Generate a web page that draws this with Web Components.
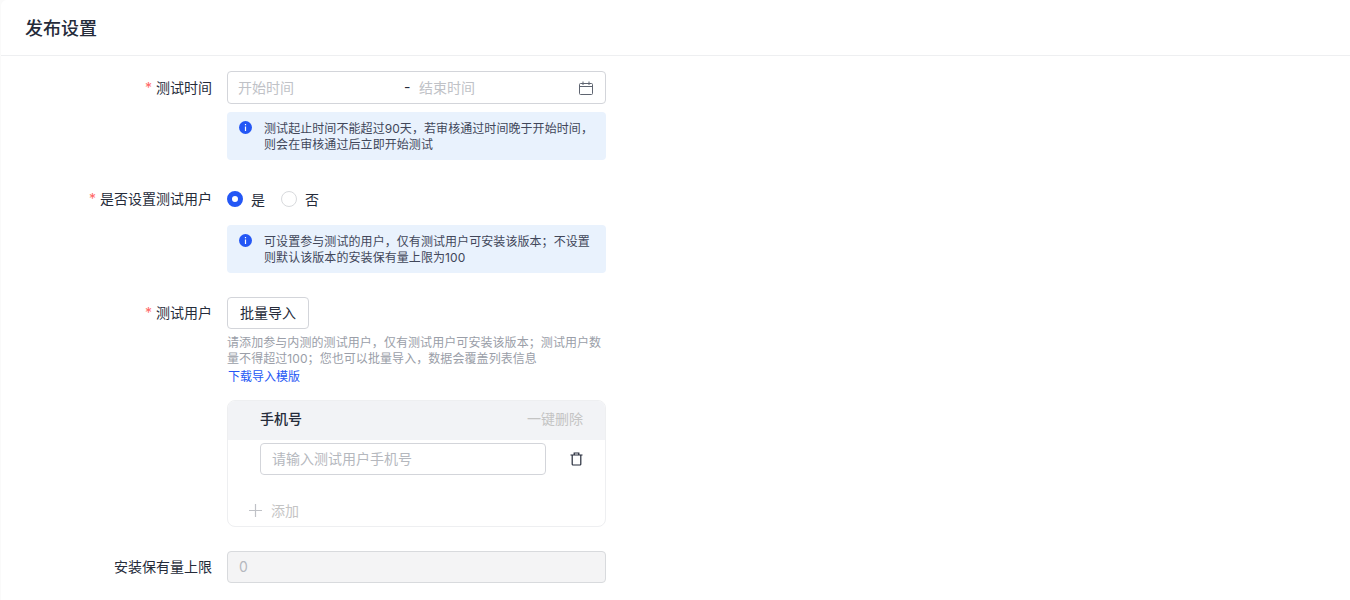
<!DOCTYPE html>
<html lang="zh-CN"><head><meta charset="utf-8"><title>发布设置</title>
<style>
html,body{margin:0;height:600px;overflow:hidden;background:#fafafa;font-family:Inter,"Noto Sans CJK SC",sans-serif;color:#252b3a}
</style></head><body>
<publish-page>
  <page-header slot="header">发布设置</page-header>
  <form-row label="测试时间" required>
    <date-range></date-range>
    <info-note style="margin-top:8px">测试起止时间不能超过90天，若审核通过时间晚于开始时间，<br>则会在审核通过后立即开始测试</info-note>
  </form-row>
  <form-row label="是否设置测试用户" required style="margin-top:23px;--label-pad:2px">
    <radio-pair></radio-pair>
    <info-note style="margin-top:10px">可设置参与测试的用户，仅有测试用户可安装该版本；不设置<br>则默认该版本的安装保有量上限为100</info-note>
  </form-row>
  <form-row label="测试用户" required style="margin-top:24px;--label-pad:2px">
    <plain-button>批量导入</plain-button>
    <help-text>请添加参与内测的测试用户，仅有测试用户可安装该版本；测试用户数<br>量不得超过100；您也可以批量导入，数据会覆盖列表信息<br><a>下载导入模版</a></help-text>
    <phone-table></phone-table>
  </form-row>
  <form-row label="安装保有量上限" style="margin-top:24px;--label-pad:2px">
    <disabled-input>0</disabled-input>
  </form-row>
</publish-page>
<script>
function def(name, css, html){
  customElements.define(name, class extends HTMLElement{
    constructor(){super();const r=this.attachShadow({mode:'open'});
      r.innerHTML='<style>'+css+'</style>'+html;}
  });
}
def('publish-page',`:host{display:block;height:600px;box-sizing:border-box;margin-left:1px;background:#fff;border-radius:6px 0 0 0}
.body{display:flex;flex-direction:column;padding-top:15px}`,
`<slot name="header"></slot><div class="body"><slot></slot></div>`);
def('page-header',`:host{display:flex;align-items:center;height:56px;box-sizing:border-box;padding:2px 0 0 24px;border-bottom:1px solid #eeeff1;font-size:18px;font-weight:500;color:#252b3a;line-height:24px}`,`<slot></slot>`);
customElements.define('form-row',class extends HTMLElement{
  constructor(){super();const r=this.attachShadow({mode:'open'});
    const req=this.hasAttribute('required');
    r.innerHTML=`<style>:host{display:grid;grid-template-columns:211px 379px;column-gap:15px;align-items:start}
    .l{display:flex;justify-content:flex-end;align-items:center;gap:4px;height:32px;box-sizing:border-box;padding-bottom:var(--label-pad,0);font-size:14px;color:#252b3a;white-space:nowrap;font-weight:400}
    .s{color:#f66;font-size:14px;line-height:14px;position:relative;top:1px}
    .c{display:flex;flex-direction:column;min-width:0}</style>
    <div class="l">${req?'<span class="s">*</span>':''}<span>${this.getAttribute('label')}</span></div><div class="c"><slot></slot></div>`;}
});
def('date-range',`:host{display:flex;align-items:center;height:33px;box-sizing:border-box;border:1px solid #d3d5da;border-radius:4px;padding:0 12px 2px 10px;font-size:14px;color:#c0c2c7}
.a{width:166px}.d{color:#252b3a;width:15px}.b{flex:1}svg{display:block;position:relative;top:1px}`,
`<span class="a">开始时间</span><span class="d">-</span><span class="b">结束时间</span>
<svg width="14" height="14" viewBox="0 0 14 14" fill="none" stroke="#5e6470" stroke-width="1"><rect x=".5" y="2.5" width="13" height="11" rx="1"/><path d="M.5 5.5h13M4 .5v3.5M10 .5v3.5"/></svg>`);
def('info-note',`:host{display:flex;align-items:flex-start;height:48px;box-sizing:border-box;background:#e9f2fd;border-radius:4px;padding:9px 0 0 12px;font-size:12px;line-height:16px;letter-spacing:.07px;color:#41475a;white-space:nowrap}
svg{flex:none;margin:0 12px 0 0;display:block}`,
`<svg width="13" height="13" viewBox="0 0 13 13"><circle cx="6.5" cy="6.5" r="6.5" fill="#2457f5"/><path d="M6.5 3v1.2M6.5 5.5V10" stroke="#fff" stroke-width="1.2"/></svg><div><slot></slot></div>`);
def('radio-pair',`:host{display:flex;align-items:center;height:32px;font-size:14px;color:#252b3a}
i{display:block;box-sizing:border-box;width:16px;height:16px;border-radius:50%;flex:none}
.on{background:#fff;border:5px solid #2457f5}.off{border:1px solid #d8dadd;background:#fff}
.t{margin-left:8px;width:30px}`,
`<i class="on"></i><span class="t">是</span><i class="off"></i><span class="t">否</span>`);
def('plain-button',`:host{display:flex;align-items:center;justify-content:center;width:82px;height:32px;box-sizing:border-box;border:1px solid #d3d5da;border-radius:4px;padding-bottom:2px;font-size:14px;color:#252b3a;background:#fff}`,`<slot></slot>`);
def('help-text',`:host{display:block;margin-top:6px;font-size:12px;line-height:16px;letter-spacing:.07px;color:#9a9ea8;white-space:nowrap}
::slotted(a){display:inline-block;color:#2457f5;margin:2px 0 0 1px;letter-spacing:0}`,`<slot></slot>`);
def('phone-table',`:host{display:block;margin-top:15px;height:127px;box-sizing:border-box;border:1px solid #eeeff1;border-radius:8px;overflow:hidden;font-size:14px}
.h{display:flex;justify-content:space-between;align-items:center;height:39px;box-sizing:border-box;padding:0 22px 6px 32px;background:#f2f3f6}
.h b{font-weight:500;color:#252b3a}.h span{color:#c4c4c4}
.r{display:flex;align-items:center;padding:3px 0 0 32px}
.inp{display:flex;align-items:center;width:286px;height:32px;box-sizing:border-box;border:1px solid #d3d5da;border-radius:4px;padding:0 0 2px 11px;color:#b5b8be}
svg{display:block;margin-left:24px}
.add{display:flex;align-items:center;margin:25px 0 0 21px;color:#c4c4c4;gap:9px}`,
`<div class="h"><b>手机号</b><span>一键删除</span></div>
<div class="r"><div class="inp">请输入测试用户手机号</div>
<svg width="13" height="14" viewBox="0 0 13 14" fill="none" stroke="#252b3a" stroke-width="1.2"><path d="M.5 3h12M4.2 3V1h4.6v2M2.2 3v9.2c0 .5.3.8.8.8h7c.5 0 .8-.3.8-.8V3"/></svg></div>
<div class="add"><svg style="margin:0" width="13" height="13" viewBox="0 0 13 13" stroke="#c0c2c7" stroke-width="1.2"><path d="M6.5 0v13M0 6.5h13"/></svg><span>添加</span></div>`);
def('disabled-input',`:host{display:flex;align-items:center;height:32px;box-sizing:border-box;border:1px solid #d8dadd;border-radius:4px;background:#f4f4f5;padding:0 0 2px 11px;font-size:14px;color:#b5b8be}`,`<slot></slot>`);
</script>
</body></html>
